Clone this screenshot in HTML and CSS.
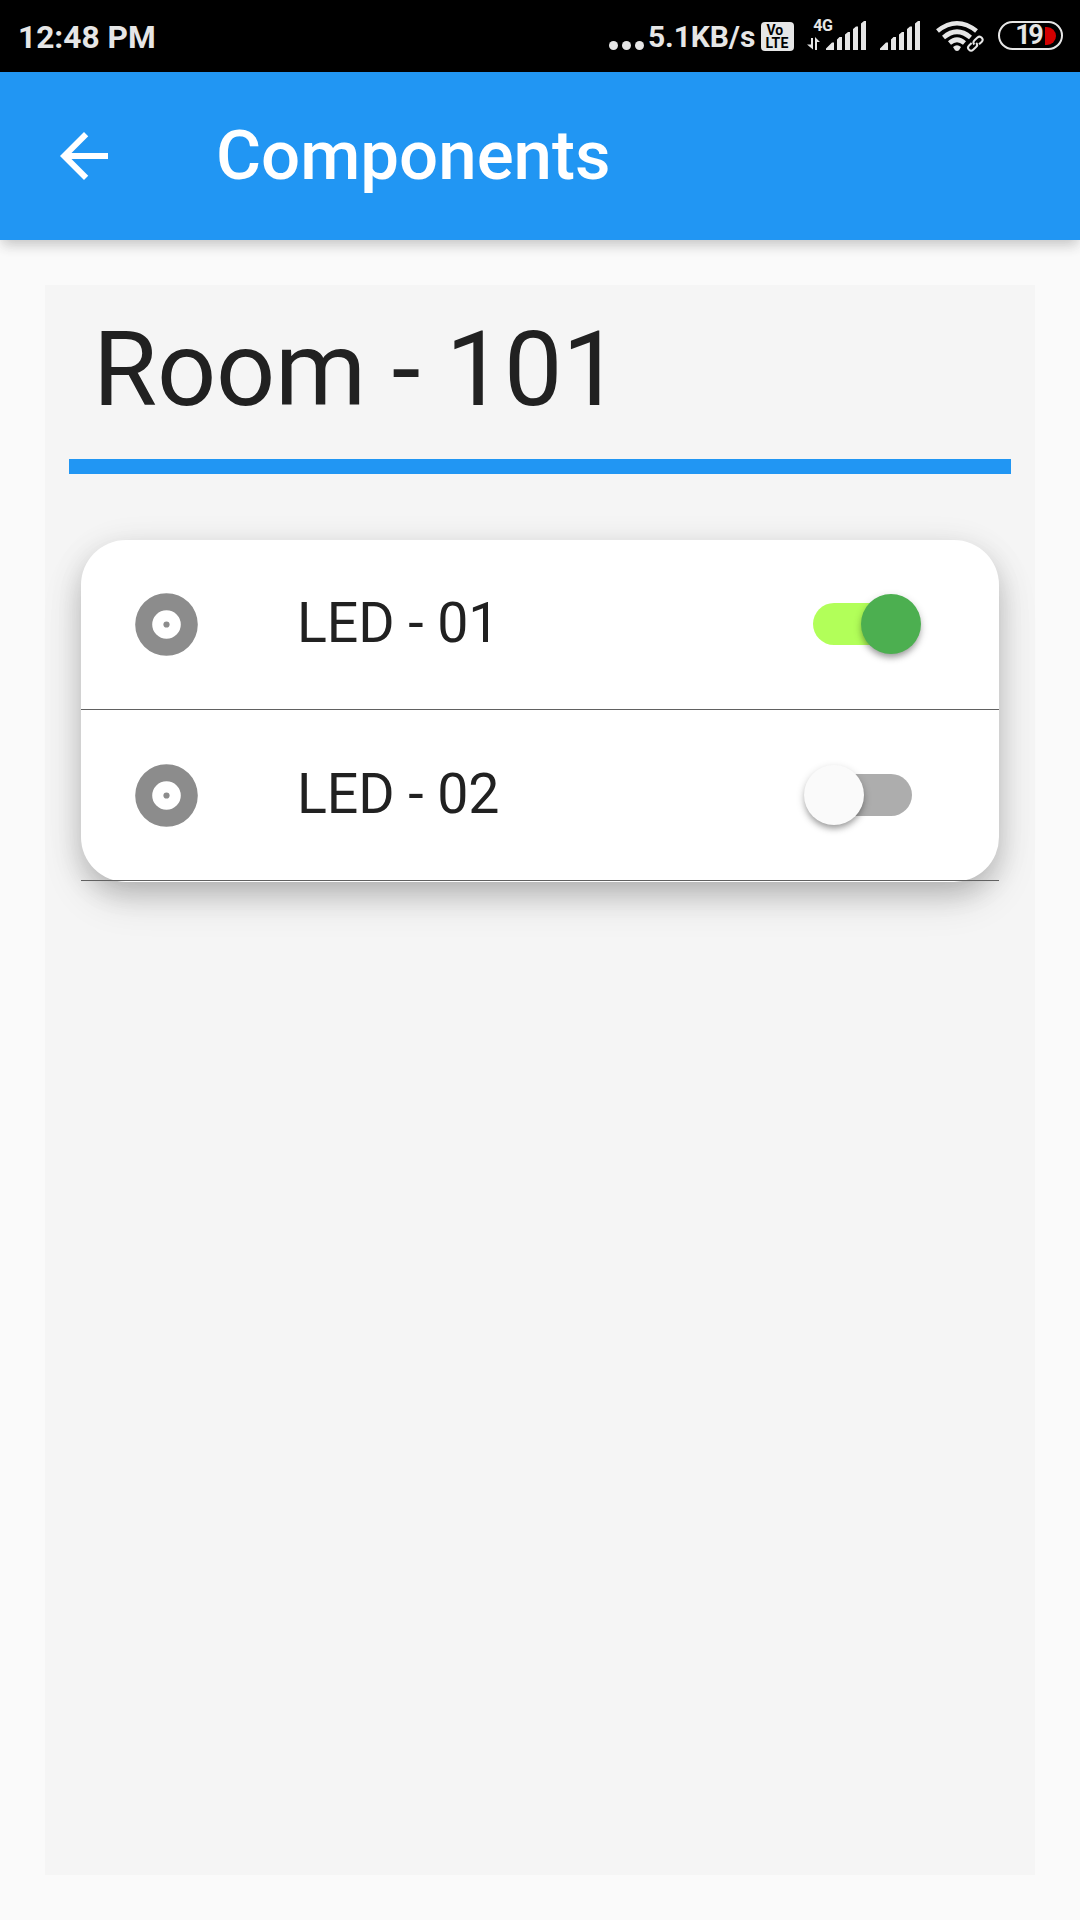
FILE: index.html
```html
<!DOCTYPE html>
<html lang="en">
<head>
<meta charset="utf-8">
<title>Components</title>
<link rel="stylesheet" href="styles.css">
</head>
<body>
<div class="status-bar">
  <span class="clock">12:48 PM</span>
  <div class="status-icons">
    <svg class="dots" width="36" height="72" viewBox="0 0 36 72"><circle cx="4.5" cy="45.5" r="4.5"/><circle cx="17.5" cy="45.5" r="4.5"/><circle cx="30.5" cy="45.5" r="4.5"/></svg>
    <span class="speed">5.1KB/s</span>
    <div class="volte"><span class="volte-top">Vo</span><span class="volte-bottom">LTE</span></div>
    <div class="network">
      <span class="network-type">4G</span>
      <svg width="14" height="14" viewBox="0 0 14 14"><path d="M4 1h2v11.500L0 7.500h4zM8 13V0l5 5h-3v8z"/></svg>
    </div>
    <svg class="signal" width="40" height="72" viewBox="0 0 40 72"><path d="M0 50v-1.500l6-6h2V50zM11 50V39.500l2.500-2.500H16v13zM19 50V34.500l3-2.500h2v18zM27 50V29l3-2.500h2V50zM35 50V23.500l3-2.500h2v29z"/></svg>
    <svg class="signal signal-second" width="40" height="72" viewBox="0 0 40 72"><path d="M0 50v-1.500l6-6h2V50zM11 50V39.500l2.500-2.500H16v13zM19 50V34.500l3-2.500h2v18zM27 50V29l3-2.500h2V50zM35 50V23.500l3-2.500h2v29z"/></svg>
    <svg class="wifi" width="48" height="72" viewBox="0 0 48 72">
      <g fill="none" stroke="#e6e6e6" stroke-width="4.600"><path d="M1.500 31Q21 15.500 40.500 31"/><path d="M7.500 37.500Q21 26 34.500 37.500"/><path d="M13.500 43Q21 36.500 28.500 43"/></g>
      <path d="M17 47q4-3.500 8 0l-2 3.200q-2 1.600-4 0z"/>
      <g fill="none" transform="rotate(-43 39.500 43.500)"><rect x="29" y="38" width="21" height="11" rx="5" fill="#000"/><g stroke="#e6e6e6" stroke-width="2"><path d="M37 40.500h-3.500a3 3 0 0 0 0 6h4a3 3 0 0 0 3-3"/><path d="M41.500 46.500h3.500a3 3 0 0 0 0-6h-4a3 3 0 0 0-3 3"/></g></g>
    </svg>
    <div class="battery"><span>19</span><i class="charge"></i></div>
  </div>
</div>
<header class="app-bar">
  <svg class="back" width="72" height="72" viewBox="0 0 24 24"><path d="M20 11H7.830l5.590-5.590L12 4l-8 8 8 8 1.410-1.410L7.830 13H20v-2z"/></svg>
  <h1>Components</h1>
</header>
<main class="panel">
  <h2>Room - 101</h2>
  <div class="rule"></div>
  <div class="card">
    <div class="row">
      <svg class="disc" width="75" height="75" viewBox="0 0 75 75"><path fill-rule="evenodd" d="M37.500 6.200a31.300 31.300 0 1 0 0 62.600a31.300 31.300 0 1 0 0-62.600zM37.500 23.200a14.300 14.300 0 1 1 0 28.600a14.300 14.300 0 1 1 0-28.600z"/><circle cx="37.500" cy="37.500" r="3.100"/></svg>
      <span class="name">LED - 01</span>
      <div class="switch on"><i class="thumb"></i></div>
    </div>
    <div class="row">
      <svg class="disc" width="75" height="75" viewBox="0 0 75 75"><path fill-rule="evenodd" d="M37.500 6.200a31.300 31.300 0 1 0 0 62.600a31.300 31.300 0 1 0 0-62.600zM37.500 23.200a14.300 14.300 0 1 1 0 28.600a14.300 14.300 0 1 1 0-28.600z"/><circle cx="37.500" cy="37.500" r="3.100"/></svg>
      <span class="name">LED - 02</span>
      <div class="switch"><i class="thumb"></i></div>
    </div>
  </div>
</main>
</body>
</html>
```
FILE: styles.css
```css
* { box-sizing: border-box; }

body {
  margin: 0;
  width: 1080px;
  height: 1920px;
  display: flex;
  flex-direction: column;
  background: #fafafa;
  color: #212121;
  font-family: Roboto, sans-serif;
}

svg { display: block; flex: none; }

.status-bar {
  flex: none;
  height: 72px;
  padding: 0 17px 0 18px;
  display: flex;
  justify-content: space-between;
  background: #000;
  color: #e6e6e6;
  fill: #e6e6e6;
  white-space: nowrap;
}

.clock { font-size: 31.700px; font-weight: 700; line-height: 75px; }
.status-icons { width: 454px; display: flex; }
.speed { width: 108px; margin-left: 3px; font-size: 30px; font-weight: 700; line-height: 74px; letter-spacing: -0.100px; }

.volte {
  width: 33px;
  height: 29px;
  margin: 22px 0 0 6px;
  padding-top: 2px;
  border-radius: 4px;
  background: #e6e6e6;
  color: #000;
  display: flex;
  flex-direction: column;
  font-size: 14px;
  font-weight: 700;
  line-height: 13px;
}
.volte-top { padding-left: 5px; }
.volte-bottom { padding-left: 4px; letter-spacing: 0.200px; }

.network { width: 25px; margin-left: 13px; padding-top: 18px; }
.network-type { display: block; padding-left: 6px; font-size: 16px; font-weight: 700; line-height: 16px; letter-spacing: -0.400px; }
.network svg { margin-top: 3px; }

.signal { margin-left: -6px; }
.signal-second { margin-left: 14px; }
.wifi { margin-left: 16px; }

.battery {
  width: 65px;
  height: 29px;
  margin: 21px 0 0 14px;
  padding: 0 5px 0 15px;
  border: 2.500px solid #e6e6e6;
  border-radius: 15px;
  display: flex;
  align-items: center;
  justify-content: space-between;
  font-size: 27px;
  font-weight: 700;
  line-height: 23px;
  letter-spacing: -2.500px;
}
.charge { flex: none; width: 11px; height: 18px; border-radius: 0 9px 9px 0; background: #d20000; }

.app-bar {
  flex: none;
  height: 168px;
  padding-left: 48px;
  display: flex;
  align-items: center;
  background: #2196f3;
  color: #fff;
  fill: #fff;
  box-shadow: 0 6px 12px -3px rgba(0,0,0,.16), 0 9px 12px rgba(0,0,0,.04), 0 3px 18px rgba(0,0,0,.05);
}
.app-bar h1 { margin: 0 0 2px 96px; font-size: 69px; font-weight: 500; line-height: 81px; }

.panel { flex: 1; margin: 45px; padding: 24px; background: #f5f5f5; }
.panel h2 { height: 150px; margin: 0; padding: 1px 24px 0; font-size: 104px; font-weight: 400; line-height: 120px; letter-spacing: -0.200px; }
.rule { height: 15px; background: #2196f3; }

.card {
  height: 342px;
  margin: 66px 12px 0;
  border-radius: 45px;
  background: #fff;
  box-shadow: 0 12px 27px -3px rgba(0,0,0,.16), 0 18px 42px rgba(0,0,0,.12), 0 6px 42px rgba(0,0,0,.06);
}
.row {
  height: 170px;
  padding: 0 78px 0 48px;
  display: flex;
  align-items: center;
  border-bottom: 1px solid #616161;
}
.row + .row { height: 171px; }
.disc { fill: #8c8c8c; }
.name { flex: 1; padding: 0 0 2px 93px; font-size: 55.500px; line-height: 66px; letter-spacing: -0.100px; }
.row + .row .name { padding-bottom: 1px; }

.switch {
  width: 99px;
  height: 42px;
  margin: 0 9px 1px 0;
  border-radius: 21px;
  background: #adadad;
  display: flex;
  align-items: center;
}
.switch.on { background: #b2ff59; justify-content: flex-end; }
.thumb {
  flex: none;
  width: 60px;
  height: 60px;
  margin: 0 -9px;
  border-radius: 50%;
  background: #fafafa;
  box-shadow: 0 5px 6px -2px rgba(0,0,0,.28), 0 3px 9px rgba(0,0,0,.2);
}
.on .thumb { background: #4caf50; }
```
